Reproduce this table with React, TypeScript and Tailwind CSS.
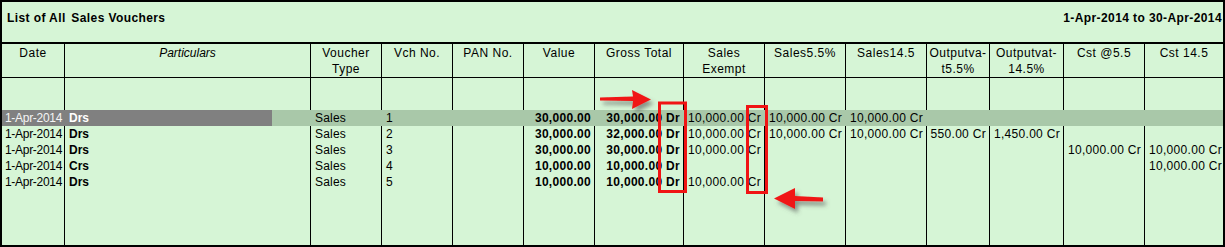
import React from "react";

const headers: React.ReactNode[] = [
  "Date",
  <span className="italic tracking-[0px]">Particulars</span>,
  <>Voucher<br />Type</>,
  "Vch No.",
  "PAN No.",
  "Value",
  "Gross Total",
  <>Sales<br />Exempt</>,
  "Sales5.5%",
  "Sales14.5",
  <>Outputva-<br />t5.5%</>,
  <>Outputvat-<br />14.5%</>,
  "Cst @5.5",
  "Cst 14.5",
];

const rows: string[][] = [
  ["1-Apr-2014", "Drs", "Sales", "1", "", "30,000.00", "30,000.00 Dr", "10,000.00 Cr", "10,000.00 Cr", "10,000.00 Cr", "", "", "", ""],
  ["1-Apr-2014", "Drs", "Sales", "2", "", "30,000.00", "32,000.00 Dr", "10,000.00 Cr", "10,000.00 Cr", "10,000.00 Cr", "550.00 Cr", "1,450.00 Cr", "", ""],
  ["1-Apr-2014", "Drs", "Sales", "3", "", "30,000.00", "30,000.00 Dr", "10,000.00 Cr", "", "", "", "", "10,000.00 Cr", "10,000.00 Cr"],
  ["1-Apr-2014", "Crs", "Sales", "4", "", "10,000.00", "10,000.00 Dr", "", "", "", "", "", "", "10,000.00 Cr"],
  ["1-Apr-2014", "Drs", "Sales", "5", "", "10,000.00", "10,000.00 Dr", "10,000.00 Cr", "", "", "", "", "", ""],
];

const grid =
  "grid grid-cols-[62px_246px_71px_71px_71px_71px_89px_81px_81px_81px_63px_74px_81px_79px]";

function cellAlign(i: number) {
  if (i === 0) return "pl-[3px] text-left tracking-[-0.3px]";
  if (i === 1) return "pl-[4px] text-left tracking-[0px]";
  if (i <= 4) return "pl-[4px] text-left tracking-[0.2px]";
  if (i === 13) return "pr-[1px] text-right tracking-[0.3px]";
  return "pr-[3px] text-right tracking-[0.3px]";
}

function EmptyRow({ className }: { className: string }) {
  return (
    <div className={`${grid} ${className}`}>
      {headers.map((_, i) => (
        <div key={i} className={i === 0 ? "" : "border-l border-black"} />
      ))}
    </div>
  );
}

export default function App() {
  return (
    <div className="relative w-[1225px] h-[247px] font-['Liberation_Sans',Arial,sans-serif] text-[12px] text-black">
      <div className="w-full h-full border-2 border-black bg-[#d6f5d6] flex flex-col">
        <div className="h-[42px] shrink-0 flex justify-between items-start pt-[8px] pl-[5px] pr-[1px] text-[12px] font-bold tracking-[0.4px] leading-[16px] border-b-2 border-black">
          <span>
            List of All <span className="ml-[2px]">Sales Vouchers</span>
          </span>
          <span>1-Apr-2014 to 30-Apr-2014</span>
        </div>
        <div className={`${grid} h-[34px] shrink-0 border-b border-black`}>
          {headers.map((h, i) => (
            <div
              key={i}
              className={`text-center leading-[16px] pt-[1px] tracking-[0.5px] whitespace-nowrap overflow-hidden ${i === 0 ? "" : "border-l border-black"}`}
            >
              {h}
            </div>
          ))}
        </div>
        <div className="flex-1 flex flex-col">
          <EmptyRow className="h-[32px] shrink-0" />
          {rows.map((r, ri) => {
            const sel = ri === 0;
            return (
              <div key={ri} className={`${grid} h-[16px] shrink-0 leading-[16px] ${sel ? "bg-[#a9c8a9]" : ""}`}>
                {r.map((c, i) => {
                  const bold = i === 1 || i === 5 || i === 6;
                  const border =
                    i === 0 ? "" : sel ? (i === 1 ? "border-l border-[#808080]" : "border-l border-[#a9c8a9]") : "border-l border-black";
                  if (sel && i === 0) {
                    return (
                      <div key={i} className="bg-[#808080] text-[#f4f4f4] pl-[3px] tracking-[-0.3px] whitespace-nowrap overflow-hidden">
                        {c}
                      </div>
                    );
                  }
                  if (sel && i === 1) {
                    return (
                      <div key={i} className={`${border} flex`}>
                        <div className="w-[207px] bg-[#808080] text-white font-bold pl-[4px]">{c}</div>
                      </div>
                    );
                  }
                  return (
                    <div
                      key={i}
                      className={`${border} ${cellAlign(i)} ${bold ? "font-bold" : ""} whitespace-nowrap overflow-hidden`}
                    >
                      {c}
                    </div>
                  );
                })}
              </div>
            );
          })}
          <EmptyRow className="flex-1" />
        </div>
      </div>
      <svg className="absolute left-0 top-0 pointer-events-none" width="1225" height="247" viewBox="0 0 1225 247">
        <defs>
          <filter id="sh" x="-20%" y="-50%" width="150%" height="250%">
            <feDropShadow dx="3" dy="4" stdDeviation="2" floodColor="#555" floodOpacity="0.6" />
          </filter>
        </defs>
        <polygon
          filter="url(#sh)"
          fill="#f01414"
          points="600,97.5 633,96.5 632,90 651,99.5 632,109 633,101 600,100.5"
        />
        <polygon
          filter="url(#sh)"
          fill="#f01414"
          points="774,198.5 795,188 795,196 823,197.5 823,201.5 795,201 795,209"
        />
        <rect x="659.5" y="103" width="26" height="88.5" fill="none" stroke="#f01414" strokeWidth="3" />
        <rect x="747.5" y="106.5" width="19" height="86" fill="none" stroke="#f01414" strokeWidth="3" />
      </svg>
    </div>
  );
}
